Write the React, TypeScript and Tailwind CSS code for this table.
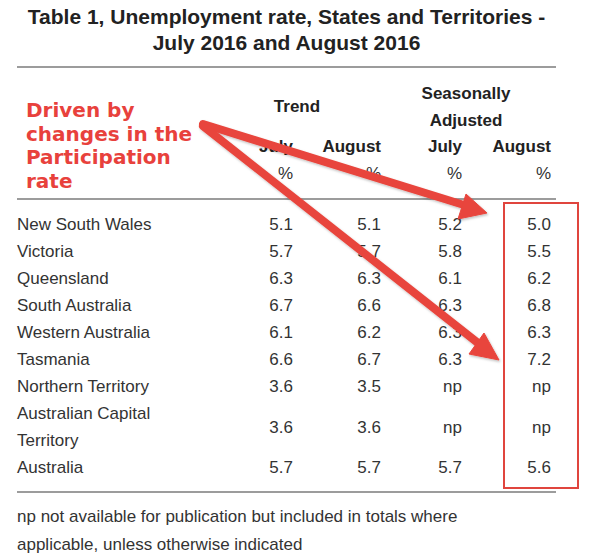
const rows: { name: string; vals: string[]; tall?: boolean }[] = [
  { name: "New South Wales", vals: ["5.1", "5.1", "5.2", "5.0"] },
  { name: "Victoria", vals: ["5.7", "5.7", "5.8", "5.5"] },
  { name: "Queensland", vals: ["6.3", "6.3", "6.1", "6.2"] },
  { name: "South Australia", vals: ["6.7", "6.6", "6.3", "6.8"] },
  { name: "Western Australia", vals: ["6.1", "6.2", "6.3", "6.3"] },
  { name: "Tasmania", vals: ["6.6", "6.7", "6.3", "7.2"] },
  { name: "Northern Territory", vals: ["3.6", "3.5", "np", "np"] },
  { name: "Australian Capital Territory", vals: ["3.6", "3.6", "np", "np"], tall: true },
  { name: "Australia", vals: ["5.7", "5.7", "5.7", "5.6"] },
]

function Arrows() {
  return (
    <svg
      className="absolute inset-0 pointer-events-none"
      width={600}
      height={556}
      viewBox="0 0 600 556"
    >
      <defs>
        <filter id="sh" x="-10%" y="-10%" width="120%" height="120%">
          <feDropShadow dx="1" dy="1.5" stdDeviation="1.2" floodColor="#000" floodOpacity="0.25" />
        </filter>
      </defs>
      <g filter="url(#sh)" fill="#e8453c" stroke="#e8453c">
        <line x1={203} y1={124} x2={464} y2={205} strokeWidth={8} strokeLinecap="round" />
        <line x1={203} y1={126} x2={478} y2={343} strokeWidth={8} strokeLinecap="round" />
        <polygon points="487,213 466,194 458,219" strokeWidth={1} strokeLinejoin="round" />
        <polygon points="499,360 484,333 469,354" strokeWidth={1} strokeLinejoin="round" />
      </g>
    </svg>
  )
}

export default function App() {
  return (
    <div className="relative w-[600px] h-[556px] overflow-hidden bg-white font-['Liberation_Sans',Arial,sans-serif] text-[#333]">
      <div className="ml-[17px] w-[539px]">
        <h1 className="pt-[4px] text-center text-[21px] leading-[26px] font-bold text-[#222]">
          Table 1, Unemployment rate, States and Territories -
          <br />
          July 2016 and August 2016
        </h1>

        <div className="mt-[10px] border-t-2 border-[#9c9c9c]" />

        <div className="grid grid-cols-[196px_80px_88px_81px_89px] grid-rows-[26.5px_26.5px_26.5px_26.5px] pt-[13px] pb-[11px] text-[17px] leading-[26.5px]">
          <div className="row-span-4 whitespace-nowrap pl-[9px] pt-[18px] font-['DejaVu_Sans',Verdana,sans-serif] text-[20px] leading-[23.5px] font-bold text-[#e8413c]">
            Driven by
            <br />
            changes in the
            <br />
            Participation
            <br />
            rate
          </div>
          <div className="col-span-2 row-span-2 flex items-center justify-center font-bold text-[#222]">
            Trend
          </div>
          <div className="col-span-2 row-span-2 text-center font-bold text-[#222]">
            Seasonally
            <br />
            Adjusted
          </div>
          <div className="text-right font-bold text-[#222]">July</div>
          <div className="text-right font-bold text-[#222]">August</div>
          <div className="text-right font-bold text-[#222]">July</div>
          <div className="text-right font-bold text-[#222]">August</div>
          <div className="text-right">%</div>
          <div className="text-right">%</div>
          <div className="text-right">%</div>
          <div className="text-right">%</div>
        </div>

        <div className="border-t-2 border-[#9c9c9c]" />

        <div className="pt-[11px] pb-[10px] text-[17px]">
          {rows.map((r) => (
            <div
              key={r.name}
              className={`grid grid-cols-[196px_80px_88px_81px_89px] items-center ${r.tall ? "h-[54px]" : "h-[27px]"}`}
            >
              <div className="pr-[40px] leading-[27px]">{r.name}</div>
              {r.vals.map((v, i) => (
                <div key={i} className="text-right leading-[27px]">
                  {v}
                </div>
              ))}
            </div>
          ))}
        </div>

        <div className="border-t-2 border-[#9c9c9c]" />

        <p className="pt-[10px] text-[17px] leading-[28px]">
          np not available for publication but included in totals where
          <br />
          applicable, unless otherwise indicated
        </p>
      </div>

      <div className="absolute left-[503px] top-[202px] w-[76px] h-[287px] border-2 border-[#e0453e]" />
      <Arrows />
    </div>
  )
}
